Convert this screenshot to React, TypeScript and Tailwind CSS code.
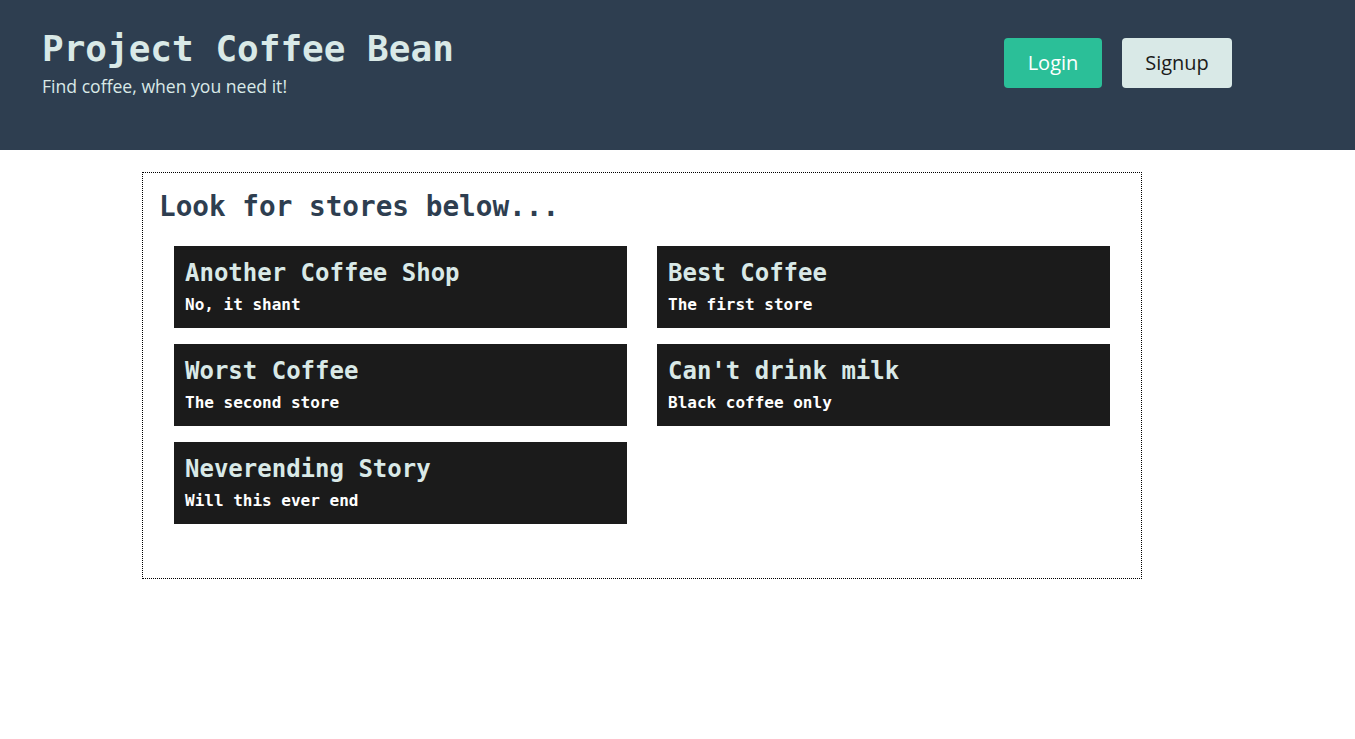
const stores = [
  { name: 'Another Coffee Shop', note: 'No, it shant' },
  { name: 'Best Coffee', note: 'The first store' },
  { name: 'Worst Coffee', note: 'The second store' },
  { name: "Can't drink milk", note: 'Black coffee only' },
  { name: 'Neverending Story', note: 'Will this ever end' },
]

const mono = "font-['DejaVu_Sans_Mono','Liberation_Mono',monospace]"
const sans = "font-['Open_Sans','Noto_Sans',sans-serif]"

function StoreCard({ name, note }: { name: string; note: string }) {
  return (
    <div className="h-[82px] bg-[#1b1b1b] px-[11px] pt-[12px]">
      <h3 className={`${mono} text-[24px] font-bold leading-[30px] text-[#d9e9e7]`}>{name}</h3>
      <p className={`${mono} mt-[7px] text-[16px] font-bold leading-[20px] text-white`}>{note}</p>
    </div>
  )
}

export default function App() {
  return (
    <div className="min-h-[739px] bg-white">
      <header className="flex h-[150px] items-start justify-between bg-[#2e3e50] pl-[42px] pr-[123px] pt-[26px]">
        <div>
          <h1 className={`${mono} text-[36px] font-bold leading-[46px] text-[#d9e9e7]`}>Project Coffee Bean</h1>
          <p className={`${sans} mt-[2px] text-[17.6px] leading-[24px] text-[#d9e9e7]`}>Find coffee, when you need it!</p>
        </div>
        <div className="mt-[12px] flex gap-[20px]">
          <button className={`${sans} h-[50px] w-[98px] rounded-[4px] bg-[#2bbf98] text-[20px] text-white`}>Login</button>
          <button className={`${sans} h-[50px] w-[110px] rounded-[4px] bg-[#d9e9e7] text-[20px] text-[#1b1b1b]`}>Signup</button>
        </div>
      </header>
      <main className="mx-[142px] mt-[22px] w-[1000px] border border-dotted border-black px-[16px] pb-[54px] pt-[14px]">
        <h2 className={`${mono} text-[27.7px] font-bold leading-[40px] text-[#2e3e50]`}>Look for stores below...</h2>
        <div className="mx-[15px] mt-[19px] grid grid-cols-2 gap-x-[30px] gap-y-[16px]">
          {stores.map((s) => (
            <StoreCard key={s.name} name={s.name} note={s.note} />
          ))}
        </div>
      </main>
    </div>
  )
}
